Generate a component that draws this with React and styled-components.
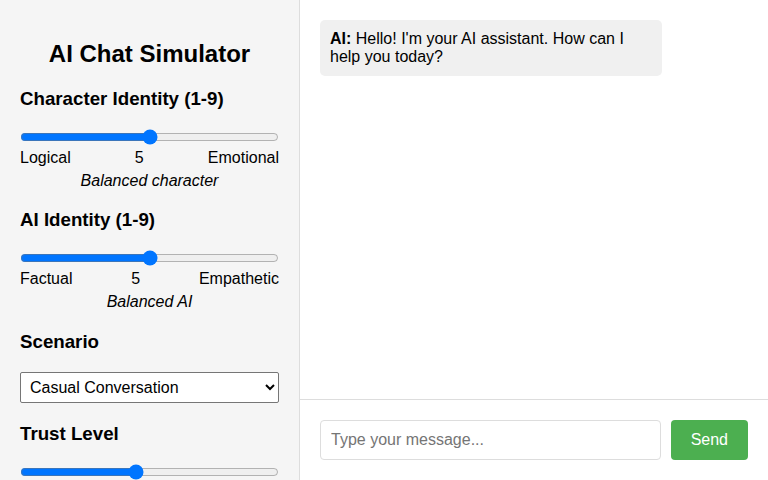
import styled, { createGlobalStyle } from "styled-components";

const GlobalStyle = createGlobalStyle`
  html, body {
    margin: 0;
    padding: 0;
    font-family: "Liberation Sans", Arial, sans-serif;
    color: #000;
  }
  * {
    box-sizing: border-box;
  }
`;

export default function App() {
  return (
    <>
      <GlobalStyle />
      <Layout>
        <Sidebar>
          <Title>AI Chat Simulator</Title>

          <SectionTitle>Character Identity (1-9)</SectionTitle>
          <Slider type="range" min="1" max="9" defaultValue="5" />
          <ScaleLabels>
            <span>Logical</span>
            <span>5</span>
            <span>Emotional</span>
          </ScaleLabels>
          <Description>Balanced character</Description>

          <SectionTitle>AI Identity (1-9)</SectionTitle>
          <Slider type="range" min="1" max="9" defaultValue="5" />
          <ScaleLabels>
            <span>Factual</span>
            <span>5</span>
            <span>Empathetic</span>
          </ScaleLabels>
          <Description>Balanced AI</Description>

          <SectionTitle>Scenario</SectionTitle>
          <Select defaultValue="casual">
            <option value="casual">Casual Conversation</option>
            <option value="support">Customer Support</option>
            <option value="debate">Debate</option>
          </Select>

          <SectionTitle>Trust Level</SectionTitle>
          <Slider type="range" min="1" max="10" defaultValue="5" />
        </Sidebar>

        <ChatPanel>
          <Messages>
            <Bubble>
              <strong>AI:</strong> Hello! I'm your AI assistant. How can I help you today?
            </Bubble>
          </Messages>
          <InputBar>
            <MessageInput placeholder="Type your message..." />
            <SendButton>Send</SendButton>
          </InputBar>
        </ChatPanel>
      </Layout>
    </>
  );
}

const Layout = styled.div`
  display: flex;
  height: 100vh;
  overflow: hidden;
`;

const Sidebar = styled.div`
  width: 300px;
  flex-shrink: 0;
  padding: 20px;
  background-color: #f5f5f5;
  border-right: 1px solid #ddd;
  overflow: hidden;
`;

const Title = styled.h2`
  font-size: 24px;
  text-align: center;
  margin: 20px 0;
`;

const SectionTitle = styled.h3`
  font-size: 18.72px;
  margin: 18.72px 0;
`;

const Slider = styled.input`
  display: block;
  width: 100%;
  margin: 0;
  height: 16px;
`;

const ScaleLabels = styled.div`
  display: flex;
  justify-content: space-between;
  font-size: 16px;
  margin-top: 4px;
`;

const Description = styled.div`
  text-align: center;
  font-style: italic;
  font-size: 16px;
  margin-top: 5px;
  padding-bottom: 1px;
`;

const Select = styled.select`
  width: 100%;
  height: 31px;
  padding: 5px;
  margin-bottom: 2px;
  font-size: 16px;
  font-family: "Liberation Sans", Arial, sans-serif;
  background: #fff;
  border: 1px solid #767676;
  border-radius: 2px;
  color: #000;
`;

const ChatPanel = styled.div`
  flex: 1;
  display: flex;
  flex-direction: column;
  background: #fff;
`;

const Messages = styled.div`
  flex: 1;
  padding: 20px;
  overflow-y: auto;
`;

const Bubble = styled.div`
  max-width: 80%;
  padding: 10px;
  background-color: #f0f0f0;
  border-radius: 5px;
  font-size: 16px;
  line-height: 18px;
`;

const InputBar = styled.div`
  display: flex;
  gap: 10px;
  padding: 20px;
  border-top: 1px solid #ddd;
`;

const MessageInput = styled.input`
  flex: 1;
  height: 40px;
  padding: 10px;
  font-size: 16px;
  font-family: "Liberation Sans", Arial, sans-serif;
  border: 1px solid #ddd;
  border-radius: 4px;
  outline: none;
  &::placeholder {
    color: #757575;
  }
`;

const SendButton = styled.button`
  height: 40px;
  padding: 10px 20px;
  background-color: #4caf50;
  color: #fff;
  border: none;
  border-radius: 4px;
  font-size: 16px;
  font-family: "Liberation Sans", Arial, sans-serif;
  cursor: pointer;
`;
